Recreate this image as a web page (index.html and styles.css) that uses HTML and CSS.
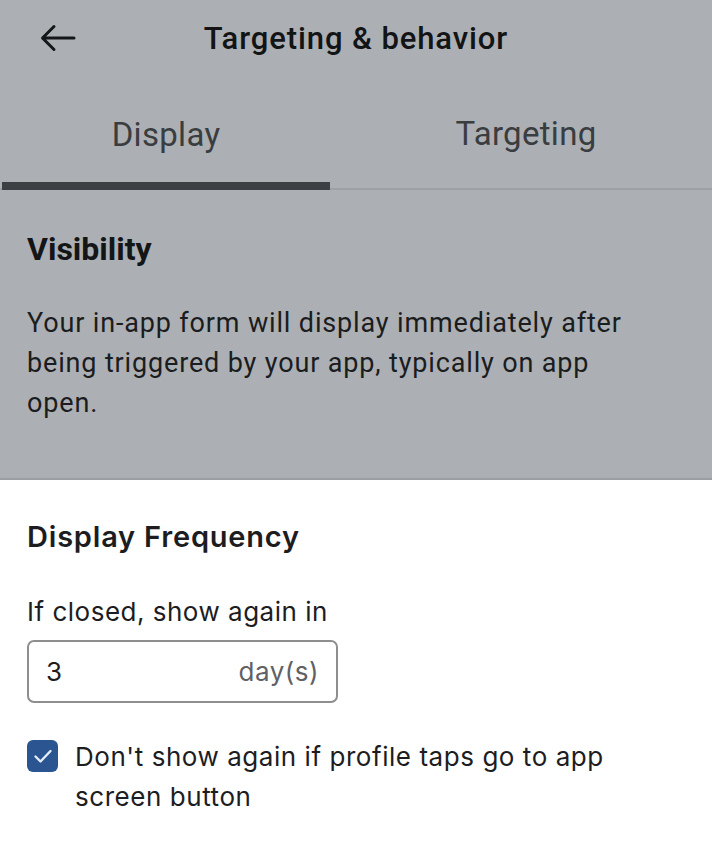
FILE: index.html
```html
<!DOCTYPE html>
<html lang="en">
<head>
<meta charset="utf-8">
<title>Targeting &amp; behavior</title>
<link rel="stylesheet" href="styles.css">
</head>
<body>
<div class="dim">
  <header class="topbar">
    <button class="back" aria-label="Back">
      <svg width="36" height="30" viewBox="0 0 36 30" fill="none" stroke="#151617" stroke-width="3" stroke-linecap="round" stroke-linejoin="round"><path d="M34 15H3M14 3.5L2.5 15L14 26.5"/></svg>
    </button>
    <h1 class="title">Targeting &amp; behavior</h1>
    <span></span>
  </header>
  <nav class="tabs">
    <div class="tab active">Display</div>
    <div class="tab">Targeting</div>
  </nav>
  <section class="visibility">
    <h2 class="vis-heading">Visibility</h2>
    <p class="vis-text">Your in-app form will display immediately after being triggered by your app, typically on app open.</p>
  </section>
</div>
<section class="sheet">
  <h2 class="sheet-heading">Display Frequency</h2>
  <label class="field-label">If closed, show again in</label>
  <div class="input">
    <span class="input-value">3</span>
    <span class="input-unit">day(s)</span>
  </div>
  <div class="check-row">
    <span class="checkbox">
      <svg width="20" height="16" viewBox="0 0 20 16" fill="none" stroke="#e4ecf7" stroke-width="2.4" stroke-linecap="round" stroke-linejoin="round"><path d="M2.5 8.5L7.5 13.5L17.5 3"/></svg>
    </span>
    <span class="check-text">Don't show again if profile taps go to app screen button</span>
  </div>
</section>
</body>
</html>
```
FILE: styles.css
```css
* { box-sizing: border-box; }
html, body { margin: 0; padding: 0; }
body {
  width: 712px;
  height: 850px;
  background: #ffffff;
  overflow: hidden;
}
.dim {
  background: #acb0b4;
  height: 480px;
  border-bottom: 2px solid #9b9fa3;
  font-family: Roboto, "Liberation Sans", sans-serif;
}
.topbar {
  height: 76px;
  display: grid;
  grid-template-columns: 1fr auto 1fr;
  align-items: center;
}
.back {
  background: none;
  border: 0;
  padding: 0;
  margin-left: 40px;
  width: 36px;
  height: 30px;
  display: flex;
  justify-self: start;
}
.title {
  margin: 0;
  font-size: 31px;
  font-weight: 500;
  letter-spacing: 0.9px;
  color: #131415;
}
.tabs {
  display: grid;
  grid-template-columns: 332px 1fr;
  height: 114px;
  border-bottom: 2px solid #9da1a5;
}
.tab {
  display: flex;
  align-items: center;
  justify-content: center;
  font-size: 33px;
  letter-spacing: 0.3px;
  color: #3a3d40;
  padding-top: 2px;
}
.tab.active {
  border-bottom: 8px solid #3c4043;
  border-radius: 0 4px 0 0;
  margin: 0 2px -2px 2px;
  padding-top: 10px;
}
.tab:not(.active) { padding-left: 8px; }
.visibility {
  padding: 40px 27px 0 27px;
}
.vis-heading {
  margin: 0;
  font-size: 32px;
  font-weight: 700;
  line-height: 38px;
  color: #141517;
}
.vis-text {
  margin: 35px 0 0 0;
  max-width: 625px;
  font-size: 27px;
  letter-spacing: 0.85px;
  line-height: 40px;
  color: #1b1c1e;
}
.sheet {
  padding: 38px 26px 0 27px;
  font-family: Inter, "Noto Sans", sans-serif;
  color: #1d1d1f;
}
.sheet-heading {
  margin: 0;
  font-size: 29px;
  font-weight: 600;
  letter-spacing: 0.8px;
  line-height: 38px;
}
.field-label {
  display: block;
  margin-top: 40px;
  font-size: 26px;
  letter-spacing: 0.5px;
  line-height: 32px;
}
.input {
  margin-top: 12px;
  width: 311px;
  height: 63px;
  border: 2px solid #8e8e8e;
  border-radius: 7px;
  display: flex;
  align-items: center;
  justify-content: space-between;
  padding: 0 17px 0 17px;
  font-size: 26px;
  letter-spacing: 0.5px;
}
.input-value { color: #1d1d1f; }
.input-unit { color: #5f6164; }
.check-row {
  margin-top: 37px;
  display: flex;
  align-items: flex-start;
  gap: 17px;
}
.checkbox {
  flex: none;
  width: 31px;
  height: 32px;
  border-radius: 6px;
  background: #2a5590;
  display: flex;
  align-items: center;
  justify-content: center;
}
.check-text {
  font-size: 26px;
  letter-spacing: 0.55px;
  line-height: 40px;
  margin-top: -3px;
  max-width: 600px;
}
```
